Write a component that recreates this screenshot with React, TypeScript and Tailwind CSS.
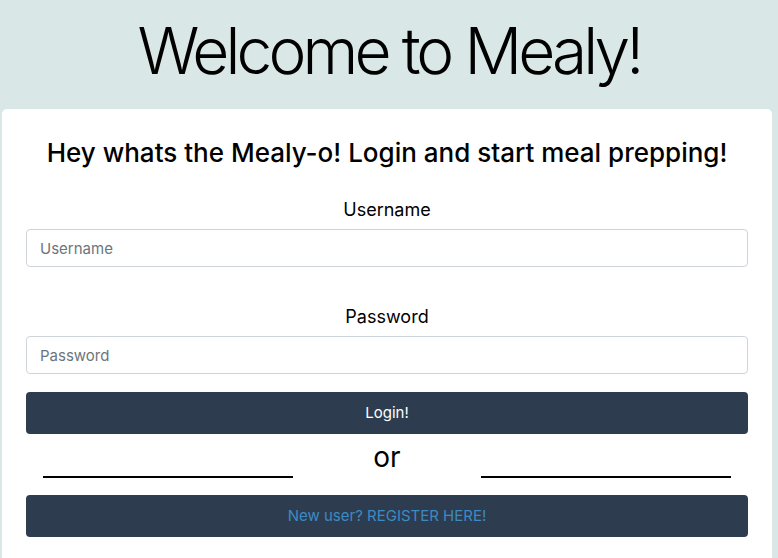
import React, { useState } from 'react';

const App: React.FC = () => {
  const [username, setUsername] = useState('');
  const [password, setPassword] = useState('');

  return (
    <div className="min-h-[558px] bg-[#d9e7e7] overflow-hidden font-['Inter','Liberation_Sans',sans-serif] text-black">
      <h1 className="text-center text-[64px] leading-none font-light tracking-[-3.9px] pt-[19px] h-[109px]">
        Welcome to Mealy!
      </h1>

      <div className="mx-[2px] mr-[6px] bg-white rounded-[5px] px-6 pt-[28px] pb-10">
        <h2 className="text-center text-[26px] leading-8 font-medium">
          Hey whats the Mealy-o! Login and start meal prepping!
        </h2>

        <form className="mt-[28px]" onSubmit={(e) => e.preventDefault()}>
          <label className="block text-center text-[18px] leading-[26px]">Username</label>
          <input
            value={username}
            onChange={(e) => setUsername(e.target.value)}
            placeholder="Username"
            className="mt-[6px] w-full h-[38px] rounded-[4px] border border-[#ced4da] px-[13px] text-[15px] placeholder:text-[#6c757d] outline-none"
          />

          <label className="block text-center text-[18px] leading-[26px] mt-[37px]">Password</label>
          <input
            type="password"
            value={password}
            onChange={(e) => setPassword(e.target.value)}
            placeholder="Password"
            className="mt-[6px] w-full h-[38px] rounded-[4px] border border-[#ced4da] px-[13px] text-[15px] placeholder:text-[#6c757d] outline-none"
          />

          <button className="mt-[18px] w-full h-[42px] rounded-[4px] bg-[#2e3c50] text-white text-[15px]">
            Login!
          </button>
        </form>

        <div className="flex items-end justify-between px-[17px] h-[45px]">
          <div className="w-[250px] border-b-2 border-black mb-[1px]" />
          <span className="text-[28px] leading-none mb-[8px]">or</span>
          <div className="w-[250px] border-b-2 border-black mb-[1px]" />
        </div>

        <button className="mt-[16px] w-full h-[42px] rounded-[4px] bg-[#2e3c50] text-[#3b8bc4] text-[15px]">
          New user? REGISTER HERE!
        </button>
      </div>
    </div>
  );
};

export default App;
